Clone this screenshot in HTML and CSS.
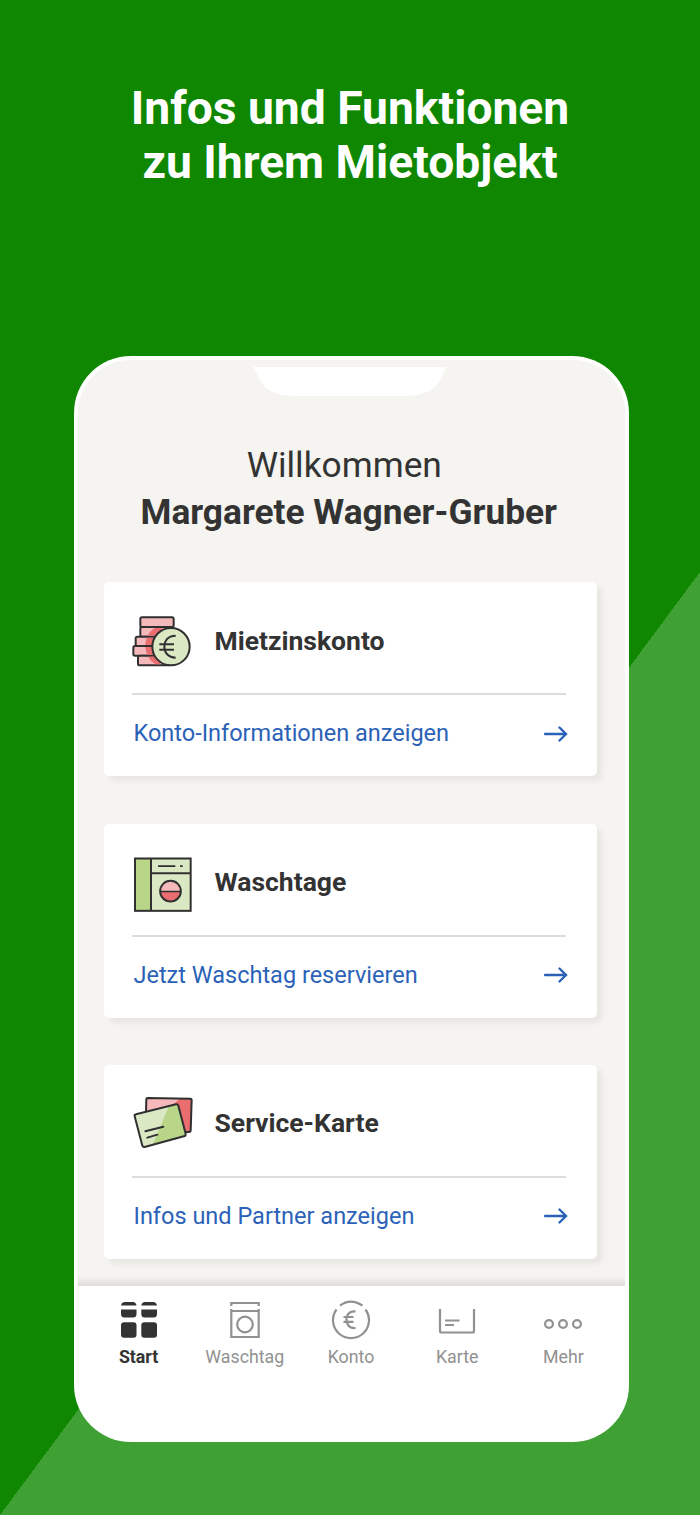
FILE: index.html
```html
<!DOCTYPE html>
<html lang="de">
	<head>
		<meta charset="utf-8">
		<title>Mietobjekt</title>
		<link rel="stylesheet" href="styles.css">
	</head>
	<body>
		<h1 class="headline">Infos und Funktionen<br>zu Ihrem Mietobjekt</h1>
		<div class="phone">
			<div class="screen">
				<svg class="notch" width="194" height="29" viewBox="0 0 194 29">
					<path fill="#fff" d="M0 0H194C189 9 187 15 182 20C175 26 165 29 153 29H41C29 29 19 26 12 20C7 15 5 9 0 0Z"/>
				</svg>
				<div class="welcome">
					<div class="hello">Willkommen</div>
					<div class="user">Margarete Wagner-Gruber</div>
				</div>
				<div class="cards">
					<div class="card">
						<div class="card-top">
							<svg class="pic" viewBox="36 42 186 174">
								<g fill="#f5b8bb" stroke="#303030" stroke-width="6">
									<rect x="61" y="52" width="100" height="29" rx="5"/>
									<rect x="61" y="81" width="90" height="29" rx="5"/>
									<rect x="47" y="110" width="90" height="28" rx="5"/>
									<rect x="40" y="138" width="90" height="29" rx="5"/>
									<rect x="54" y="167" width="95" height="29" rx="5"/>
								</g>
								<g fill="#ea6d70">
									<path d="M105 84H125V107H83Q90 92 105 84Z"/>
									<path d="M81 113H110V135H76Q76 123 81 113Z"/>
									<path d="M76 141H105V164H82Q77 154 76 141Z"/>
									<path d="M85 170H120V193H108Q93 186 85 170Z"/>
								</g>
								<circle cx="153" cy="140" r="56" fill="#dbe8c4" stroke="#303030" stroke-width="6"/>
								<path d="M167 107C142 107 133 124 133 140C133 157 144 173 167 173M118 133H162M118 149H162" fill="none" stroke="#303030" stroke-width="6"/>
							</svg>
							<span class="card-title">Mietzinskonto</span>
						</div>
						<div class="card-link">
							<a>Konto-Informationen anzeigen</a>
							<svg class="arrow" viewBox="0 0 24 16"><path d="M1 8H22M15.5 1.5L22 8L15.5 14.5"/></svg>
						</div>
					</div>
					<div class="card">
						<div class="card-top">
							<svg class="pic" viewBox="36 31.5 186 174">
								<rect x="45" y="42" width="167" height="157" fill="#dbe8c4"/>
								<rect x="45" y="42" width="48" height="157" fill="#b9d588"/>
								<path d="M120 140A31 29 0 0 1 183 140Z" fill="#f5b8bb"/>
								<path d="M120 140A31 29 0 0 0 183 140Z" fill="#ea6d70"/>
								<g fill="none" stroke="#303030" stroke-width="6">
									<rect x="45" y="42" width="167" height="157"/>
									<path d="M93 42V199M93 86H212"/>
									<path d="M114 65H166M180 65H188M120 141H183" stroke-width="5"/>
									<circle cx="151.500" cy="140" r="31"/>
								</g>
							</svg>
							<span class="card-title">Waschtage</span>
						</div>
						<div class="card-link">
							<a>Jetzt Waschtag reservieren</a>
							<svg class="arrow" viewBox="0 0 24 16"><path d="M1 8H22M15.5 1.5L22 8L15.5 14.5"/></svg>
						</div>
					</div>
					<div class="card">
						<div class="card-top">
							<svg class="pic" viewBox="36 36 186 174">
								<path d="M79 41L215 44L211 144L190 144L78 90Z" fill="#f5b8bb"/>
								<path d="M181 43L215 44L211 144L190 144L150 70Z" fill="#ea6d70"/>
								<path d="M83 42L211 44Q215 44 215 48L212 139Q212 144 207 144H194M78 82L79 46Q79 42 83 42" fill="none" stroke="#303030" stroke-width="6"/>
								<path d="M48 91L168 61Q173 60 175 65L197 149Q198 154 194 156L74 189Q69 190 67 185L44 97Q43 92 48 91Z" fill="#dbe8c4"/>
								<path d="M147 66L168 61Q173 60 175 65L197 149Q198 154 194 156L98 182Z" fill="#b9d588"/>
								<path d="M48 91L168 61Q173 60 175 65L197 149Q198 154 194 156L74 189Q69 190 67 185L44 97Q43 92 48 91ZM76 142L130 128M82 161L112 152" fill="none" stroke="#303030" stroke-width="6" stroke-linecap="round"/>
							</svg>
							<span class="card-title">Service-Karte</span>
						</div>
						<div class="card-link">
							<a>Infos und Partner anzeigen</a>
							<svg class="arrow" viewBox="0 0 24 16"><path d="M1 8H22M15.5 1.5L22 8L15.5 14.5"/></svg>
						</div>
					</div>
				</div>
			</div>
			<div class="tabs">
				<div class="tab active">
					<svg class="tab-icon" viewBox="0 0 40 40">
						<g fill="#333">
							<path d="M2 5.500Q2.500 2 6 2H14Q17 2 17.500 5.500ZM22.300 5.500Q22.800 2 26 2H34Q37.500 2 38 5.500Z"/>
							<path d="M2 9.500H17.500V14Q17.500 17.500 14 17.500H5.500Q2 17.500 2 14ZM22.300 9.500H38V14Q38 17.500 34.500 17.500H25.800Q22.300 17.500 22.300 14Z"/>
							<rect x="2" y="22.300" width="15.500" height="15.500" rx="3"/>
							<rect x="22.300" y="22.300" width="15.700" height="15.500" rx="3"/>
						</g>
					</svg>
					<span>Start</span>
				</div>
				<div class="tab">
					<svg class="tab-icon" viewBox="0 0 40 40">
						<path d="M6.300 6V3H33.700V6M6.300 9V37H33.700V9M6.300 11H33.700"/>
						<circle cx="20" cy="24.500" r="7.800"/>
					</svg>
					<span>Waschtag</span>
				</div>
				<div class="tab">
					<svg class="tab-icon" viewBox="0 0 40 40">
						<path d="M9 5.700Q19.500 -2.300 31.500 5.700M5.500 9.500A18 18 0 1 0 34.500 9.500"/>
						<path d="M24.500 11.500C17.500 11 15.500 15.500 15.500 19.500C15.500 23.500 17.500 28.500 24.500 28M12.500 17H22.500M12.500 21.800H22.500"/>
					</svg>
					<span>Konto</span>
				</div>
				<div class="tab">
					<svg class="tab-icon" viewBox="0 0 40 40">
						<path d="M3 9V31Q3 32.500 4.500 32.500H35.500Q37 32.500 37 31V9M8 20.500H22.500M8 25H17"/>
					</svg>
					<span>Karte</span>
				</div>
				<div class="tab">
					<svg class="tab-icon" viewBox="0 0 40 40">
						<circle cx="6" cy="24" r="3.900"/>
						<circle cx="20" cy="24" r="3.900"/>
						<circle cx="34" cy="24" r="3.900"/>
					</svg>
					<span>Mehr</span>
				</div>
			</div>
		</div>
	</body>
</html>
```
FILE: styles.css
```css
*{
	box-sizing: border-box;
}
body{
	margin: 0;
	height: 1515px;
	overflow: hidden;
	font-family: Roboto, "Liberation Sans", sans-serif;
	color: #333;
	background: #0f8700 linear-gradient(to bottom right, transparent 50%, #3fa033 50%) no-repeat 0 100% / 700px 943px;
}
.headline{
	margin: 0;
	padding-top: 81px;
	height: 356.4px;
	text-align: center;
	font-size: 46.2px;
	line-height: 54px;
	font-weight: 700;
	color: #fff;
}
.phone{
	width: 554.5px;
	height: 1086px;
	margin-left: 74px;
	padding: 4px;
	border-radius: 57px;
	background: #fff;
	overflow: hidden;
}
.screen{
	height: 926px;
	border-radius: 53px 53px 0 0;
	background: linear-gradient(transparent 916px, #dddcd8 926px), #f5f4f0;
}
.notch{
	display: block;
	margin: 0 0 0 175px;
	padding-top: 7px;
	height: 36px;
	width: 194px;
}
.welcome{
	padding-top: 46px;
	height: 186px;
	text-align: center;
	font-size: 35.3px;
	line-height: 47px;
}
.hello{
	padding-right: 14px;
}
.user{
	font-weight: 700;
	padding-right: 5px;
}
.cards{
	display: flex;
	flex-direction: column;
	gap: 47.3px;
	padding: 0 27.5px 0 26px;
}
.card{
	height: 194px;
	padding: 0 29px 0 28px;
	border-radius: 5px;
	background: #fff;
	box-shadow: 5px 5px 6px rgba(0,0,0,.06);
}
.card-top{
	display: flex;
	height: 113px;
	padding-top: 31.5px;
	margin-right: 2px;
	border-bottom: 2px solid #dcdcdc;
}
.pic{
	width: 62px;
	height: 58px;
}
.card-title{
	margin-left: 20.5px;
	font-size: 26.5px;
	line-height: 54px;
	font-weight: 700;
}
.card-link{
	display: flex;
	justify-content: space-between;
	align-items: center;
	height: 77px;
	padding-left: 1.5px;
	font-size: 23.5px;
	color: #2b62b8;
}
.card-link a{
	margin-bottom: 1px;
}
.arrow{
	width: 24px;
	height: 16px;
	fill: none;
	stroke: #2b62b8;
	stroke-width: 2.4;
	stroke-linecap: round;
}
.tabs{
	display: flex;
	padding: 14px 8px 0 7.5px;
}
.tab{
	flex: 1;
	display: flex;
	flex-direction: column;
	align-items: center;
	font-size: 17.8px;
	line-height: 22px;
	color: #919191;
}
.tab-icon{
	width: 40px;
	height: 40px;
	margin-bottom: 6px;
	fill: none;
	stroke: #919191;
	stroke-width: 2.2;
}
.active{
	font-weight: 700;
	color: #333;
}
.active .tab-icon{
	stroke: none;
}
```
